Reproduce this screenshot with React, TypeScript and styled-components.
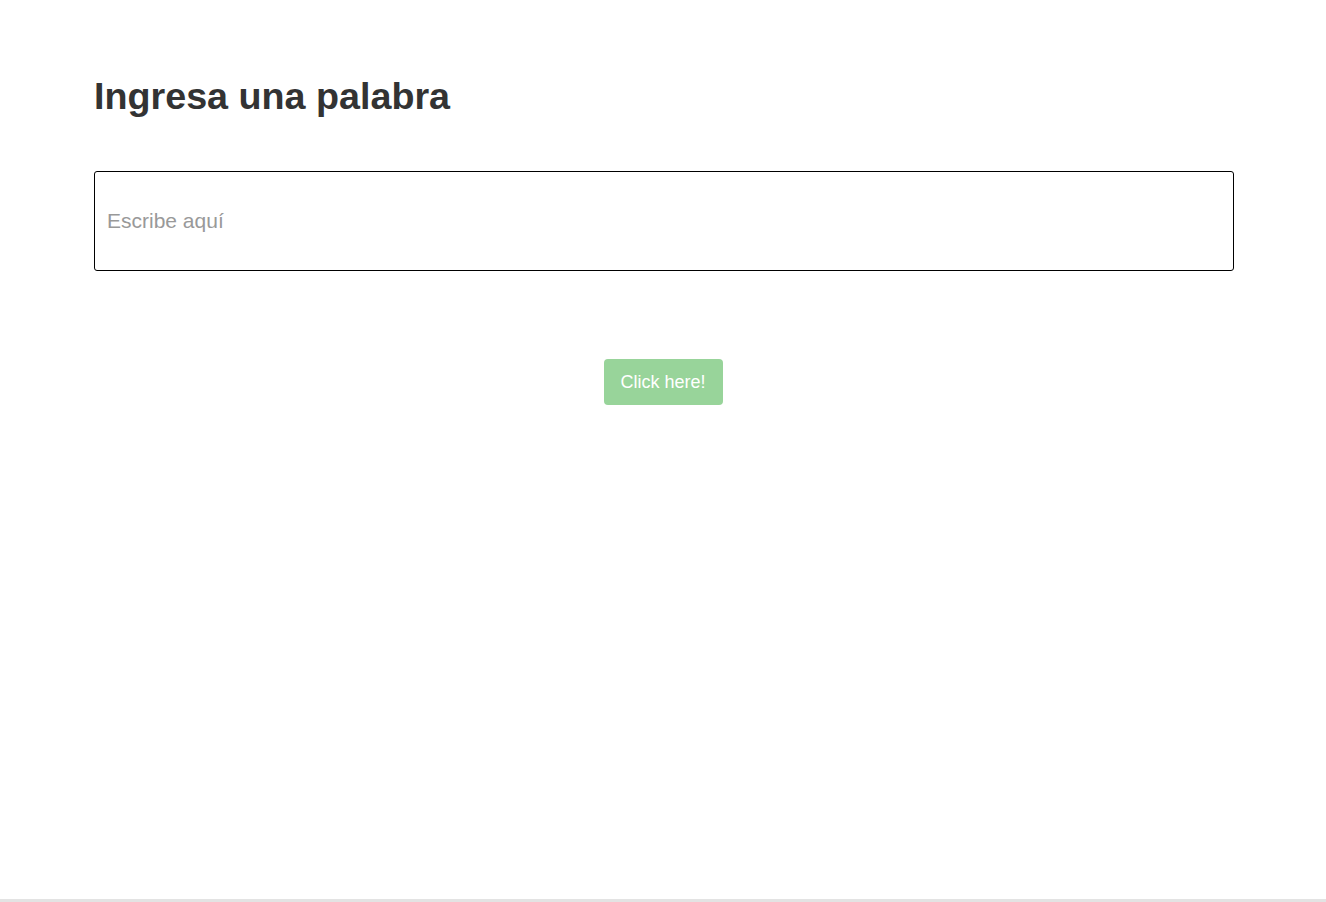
import React from "react";
import styled, { createGlobalStyle } from "styled-components";

const Global = createGlobalStyle`
  html, body { margin: 0; padding: 0; background: #fff; }
  body { font-family: "Liberation Sans", Arial, sans-serif; }
`;

const Page = styled.div`
  height: 902px;
  box-sizing: border-box;
  display: flex;
  flex-direction: column;
  border-bottom: 3px solid #e3e3e3;
`;

const Main = styled.main`
  flex: 1;
  padding: 74px 92px 0 94px;
  display: flex;
  flex-direction: column;
`;

const Title = styled.h1`
  margin: 0;
  font-size: 37.7px;
  font-weight: 700;
  color: #333;
  line-height: 44px;
`;

const Input = styled.input`
  margin-top: 53px;
  height: 100px;
  box-sizing: border-box;
  border: 1px solid #000;
  border-radius: 3px;
  padding: 0 12px;
  font-family: "Liberation Sans", Arial, sans-serif;
  font-size: 21px;
  color: #333;
  outline: none;
  &::placeholder { color: #999; }
`;

const Actions = styled.div`
  display: flex;
  justify-content: center;
  margin-top: 88px;
`;

const Button = styled.button`
  width: 119px;
  height: 46px;
  margin-right: 2px;
  border: none;
  border-radius: 4px;
  background: #98d49a;
  color: #fff;
  font-family: "Liberation Sans", Arial, sans-serif;
  font-size: 18px;
  cursor: pointer;
`;

export default function App() {
  return (
    <Page>
      <Global />
      <Main>
        <Title>Ingresa una palabra</Title>
        <Input placeholder="Escribe aquí" />
        <Actions>
          <Button>Click here!</Button>
        </Actions>
      </Main>
    </Page>
  );
}
